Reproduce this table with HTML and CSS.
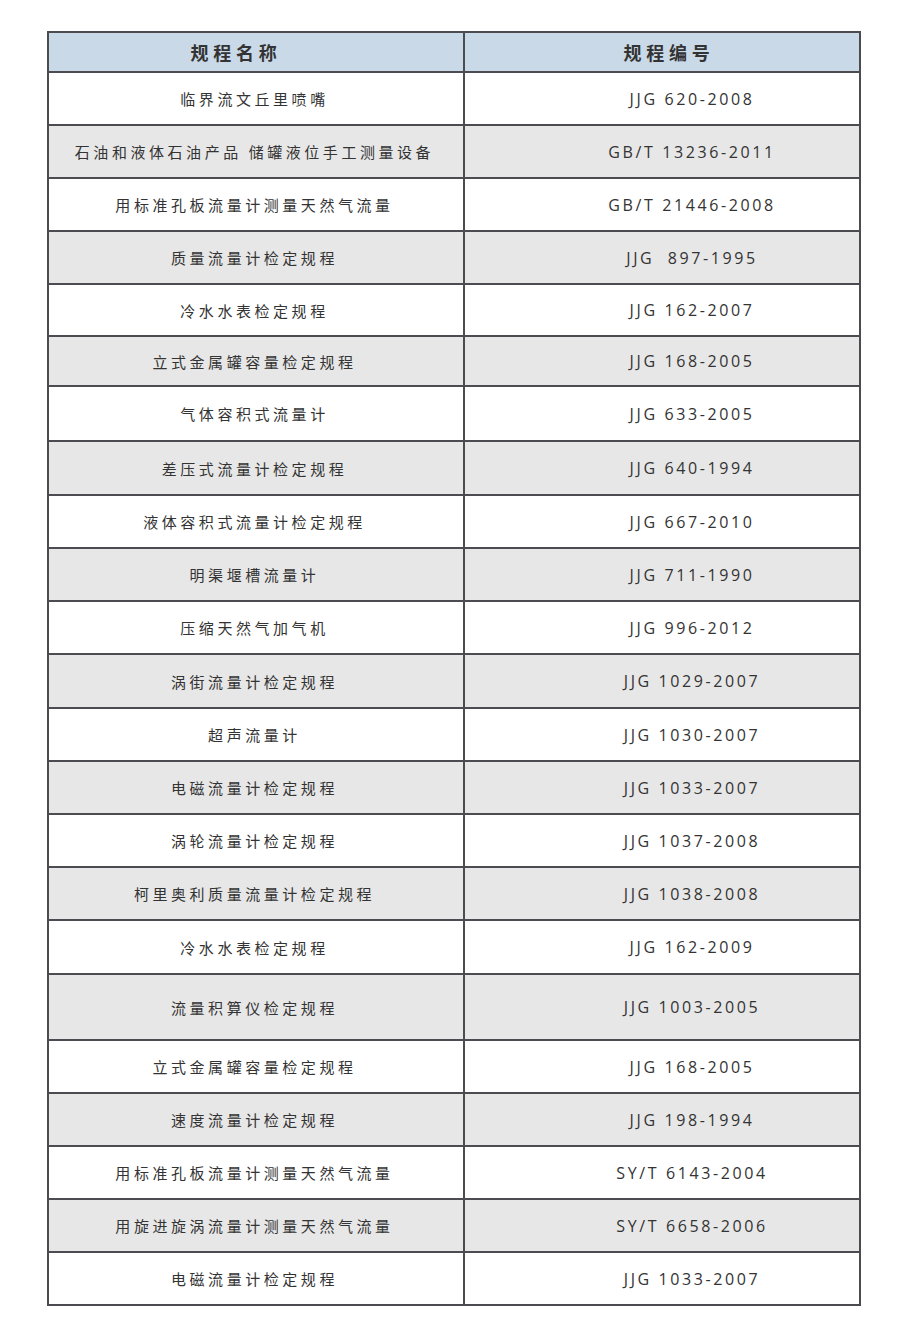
FILE: index.html
```html
<!DOCTYPE html>
<html lang="zh-CN">
<head>
<meta charset="utf-8">
<title>规程列表</title>
<link rel="stylesheet" href="styles.css">
</head>
<body>
<div class="table">
  <div class="row head"><div class="c name">规程名称</div><div class="c code">规程编号</div></div>
  <div class="row"><div class="c name">临界流文丘里喷嘴</div><div class="c code">JJG 620-2008</div></div>
  <div class="row alt"><div class="c name">石油和液体石油产品 储罐液位手工测量设备</div><div class="c code">GB/T 13236-2011</div></div>
  <div class="row"><div class="c name">用标准孔板流量计测量天然气流量</div><div class="c code">GB/T 21446-2008</div></div>
  <div class="row alt"><div class="c name">质量流量计检定规程</div><div class="c code">JJG&nbsp; 897-1995</div></div>
  <div class="row h52"><div class="c name">冷水水表检定规程</div><div class="c code">JJG 162-2007</div></div>
  <div class="row alt h50"><div class="c name">立式金属罐容量检定规程</div><div class="c code">JJG 168-2005</div></div>
  <div class="row h55"><div class="c name">气体容积式流量计</div><div class="c code">JJG 633-2005</div></div>
  <div class="row alt h54"><div class="c name">差压式流量计检定规程</div><div class="c code">JJG 640-1994</div></div>
  <div class="row"><div class="c name">液体容积式流量计检定规程</div><div class="c code">JJG 667-2010</div></div>
  <div class="row alt"><div class="c name">明渠堰槽流量计</div><div class="c code">JJG 711-1990</div></div>
  <div class="row"><div class="c name">压缩天然气加气机</div><div class="c code">JJG 996-2012</div></div>
  <div class="row alt h54"><div class="c name">涡街流量计检定规程</div><div class="c code">JJG 1029-2007</div></div>
  <div class="row"><div class="c name">超声流量计</div><div class="c code">JJG 1030-2007</div></div>
  <div class="row alt"><div class="c name">电磁流量计检定规程</div><div class="c code">JJG 1033-2007</div></div>
  <div class="row"><div class="c name">涡轮流量计检定规程</div><div class="c code">JJG 1037-2008</div></div>
  <div class="row alt"><div class="c name">柯里奥利质量流量计检定规程</div><div class="c code">JJG 1038-2008</div></div>
  <div class="row h54"><div class="c name">冷水水表检定规程</div><div class="c code">JJG 162-2009</div></div>
  <div class="row alt h66"><div class="c name">流量积算仪检定规程</div><div class="c code">JJG 1003-2005</div></div>
  <div class="row"><div class="c name">立式金属罐容量检定规程</div><div class="c code">JJG 168-2005</div></div>
  <div class="row alt"><div class="c name">速度流量计检定规程</div><div class="c code">JJG 198-1994</div></div>
  <div class="row"><div class="c name">用标准孔板流量计测量天然气流量</div><div class="c code">SY/T 6143-2004</div></div>
  <div class="row alt"><div class="c name">用旋进旋涡流量计测量天然气流量</div><div class="c code">SY/T 6658-2006</div></div>
  <div class="row"><div class="c name">电磁流量计检定规程</div><div class="c code">JJG 1033-2007</div></div>
</div>
</body>
</html>
```
FILE: styles.css
```css
html, body {
  margin: 0;
  padding: 0;
  background: #ffffff;
}
body {
  font-family: "Noto Sans CJK SC", "Noto Sans", sans-serif;
  color: #333333;
}
.table {
  margin: 31px 0 0 47px;
  width: 814px;
  box-sizing: border-box;
  border: 2px solid #4b4b50;
  display: flex;
  flex-direction: column;
}
.row {
  display: grid;
  grid-template-columns: 416px 1fr;
  height: 51px;
  background: #ffffff;
}
.row + .row {
  border-top: 2px solid #4b4b50;
}
.row.alt { background: #e7e7e7; }
.row.head {
  height: 38px;
  background: #c9d9e8;
}
.row.h50 { height: 48px; }
.row.h52 { height: 50px; }
.row.h54 { height: 52px; }
.row.h55 { height: 53px; }
.row.h66 { height: 64px; }
.c {
  display: flex;
  align-items: center;
  justify-content: center;
  white-space: pre;
}
.name {
  border-right: 2px solid #4b4b50;
  font-size: 15px;
  letter-spacing: 3.55px;
  padding-right: 3px;
}
.code {
  font-family: "Open Sans", "Liberation Sans", sans-serif;
  font-size: 16px;
  letter-spacing: 2.6px;
  padding-left: 60px;
}
.head .c {
  font-family: "Noto Sans CJK SC", sans-serif;
  font-weight: 700;
  font-size: 18px;
  letter-spacing: 4.8px;
  color: #333333;
}
.head .name { padding-right: 40px; }
.head .code { padding-left: 14px; }
```
